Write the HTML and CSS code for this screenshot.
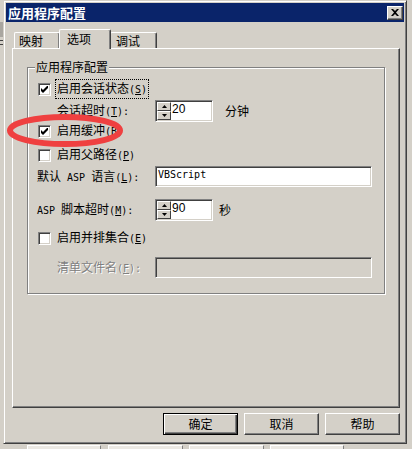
FILE: index.html
```html
<!DOCTYPE html>
<html lang="zh-CN">
<head>
<meta charset="utf-8">
<title>应用程序配置</title>
<link rel="stylesheet" href="styles.css">
</head>
<body>
<div class="screen">
  <div class="main">
    <div class="under-left"><div class="blk"></div><div class="mark"></div><div class="mark"></div></div>
    <div class="dialog">
      <div class="titlebar">
        <span class="title">应用程序配置</span>
        <span class="close"><svg viewBox="0 0 8 7" width="8" height="7"><path d="M0 0 L2 0 L4 2 L6 0 L8 0 L5 3.5 L8 7 L6 7 L4 5 L2 7 L0 7 L3 3.5 Z" fill="#000"/></svg></span>
      </div>
      <div class="client">
        <div class="tabs">
          <div class="tab t1">映射</div>
          <div class="tab sel">选项</div>
          <div class="tab t3">调试</div>
        </div>
        <div class="panel">
          <div class="group">
            <span class="legend">应用程序配置</span>
            <div class="row chk-row">
              <span class="cb"><svg viewBox="0 0 7 7"><polygon points="0,2 2,4 7,-1 7,2 2,7 0,5" fill="#000"/></svg></span>
              <span class="cl focus">启用会话状态<span class="mn">(<u>S</u>)</span></span>
            </div>
            <div class="row ctl-row mt2">
              <span class="lab ind">会话超时<span class="mn">(<u>T</u>):</span></span>
              <span class="spin">
                <span class="spin-btns">
                  <span class="sb"><svg viewBox="0 0 5 3"><polygon points="2.5,0 5,3 0,3" fill="#000"/></svg></span>
                  <span class="sb"><svg viewBox="0 0 5 3"><polygon points="0,0 5,0 2.5,3" fill="#000"/></svg></span>
                </span>
                <span class="spin-val">20</span>
              </span>
              <span class="unit u1">分钟</span>
            </div>
            <div class="row chk-row">
              <span class="cb"><svg viewBox="0 0 7 7"><polygon points="0,2 2,4 7,-1 7,2 2,7 0,5" fill="#000"/></svg></span>
              <span class="cl">启用缓冲<span class="mn">(<u>B</u>)</span></span>
            </div>
            <div class="row chk-row mt6">
              <span class="cb"></span>
              <span class="cl">启用父路径<span class="mn">(<u>P</u>)</span></span>
            </div>
            <div class="row fld-row mt2">
              <span class="lab out">默认<span class="mn"> ASP </span>语言<span class="mn">(<u>L</u>):</span></span>
              <span class="field">VBScript</span>
            </div>
            <div class="row ctl-row mt12">
              <span class="lab out"><span class="mn">ASP </span>脚本超时<span class="mn">(<u>M</u>):</span></span>
              <span class="spin">
                <span class="spin-btns">
                  <span class="sb"><svg viewBox="0 0 5 3"><polygon points="2.5,0 5,3 0,3" fill="#000"/></svg></span>
                  <span class="sb"><svg viewBox="0 0 5 3"><polygon points="0,0 5,0 2.5,3" fill="#000"/></svg></span>
                </span>
                <span class="spin-val">90</span>
              </span>
              <span class="unit u2">秒</span>
            </div>
            <div class="row chk-row mt8">
              <span class="cb"></span>
              <span class="cl">启用并排集合<span class="mn">(<u>E</u>)</span></span>
            </div>
            <div class="row fld-row mt10">
              <span class="lab ind dis">清单文件名<span class="mn">(<u>F</u>):</span></span>
              <span class="field dis"></span>
            </div>
          </div>
        </div>
        <div class="buttons">
          <span class="btn def">确定</span>
          <span class="btn">取消</span>
          <span class="btn">帮助</span>
        </div>
      </div>
    </div>
    <div class="under-right"></div>
  </div>
  <div class="under-bottom">
    <span class="ub b1"></span>
    <span class="ub b2"></span>
    <span class="ub b3"></span>
    <span class="ub b4"></span>
  </div>
  <svg class="ink" viewBox="0 0 412 449" width="412" height="449">
    <ellipse cx="65" cy="130.5" rx="55" ry="13.5" fill="none" stroke="#ef4040" stroke-width="6"/>
  </svg>
</div>
</body>
</html>
```

FILE: styles.css
```css
* { box-sizing: border-box; }
html, body { margin: 0; padding: 0; }
body {
  font-family: "Noto Sans CJK SC", sans-serif;
  font-size: 12px;
  color: #000;
  background: #d4d0c8;
}
.screen {
  position: relative;
  width: 412px;
  height: 449px;
  overflow: hidden;
  background: #d4d0c8;
}
.main { display: flex; height: 444px; }

.under-left { width: 3px; flex: none; display: flex; flex-direction: column; }
.under-left .blk { height: 15px; margin-top: 22px; background: #a9a6a0; }
.under-left .mark { height: 1px; margin-top: 3px; background: #404040; width: 3px; }
.under-right { flex: 1; background: #d4d0c8; }

.dialog {
  width: 404px;
  height: 444px;
  flex: none;
  border: 1px solid;
  border-color: #d4d0c8 #404040 #404040 #d4d0c8;
  box-shadow: inset 1px 1px #fff, inset -1px -1px #808080;
  padding: 2px;
  display: flex;
  flex-direction: column;
  background: #d4d0c8;
}
.titlebar {
  height: 19px;
  flex: none;
  background: #0a246a;
  display: flex;
  align-items: center;
  justify-content: space-between;
  padding: 0 1px 0 2px;
}
.title {
  color: #fff;
  font-weight: bold;
  font-size: 13px;
  line-height: 15px;
}
.close {
  width: 16px;
  height: 14px;
  background: #d4d0c8;
  border: 1px solid;
  border-color: #fff #404040 #404040 #fff;
  box-shadow: inset -1px -1px #808080;
  display: flex;
  align-items: center;
  justify-content: center;
}
.close svg { display: block; }

.client { flex: 1; display: flex; flex-direction: column; }
.tabs {
  display: flex;
  align-items: flex-end;
  height: 19px;
  margin-top: 7px;
  padding-left: 8px;
}
.tab {
  height: 16px;
  background: #d4d0c8;
  border-left: 1px solid #fff;
  border-top: 1px solid #fff;
  border-right: 1px solid #404040;
  box-shadow: inset -1px 0 #808080;
  border-radius: 2px 2px 0 0;
  line-height: 14px;
  padding-top: 1px;
  white-space: nowrap;
}
.tab.t1 { width: 46px; padding-left: 4px; }
.tab.sel {
  position: relative;
  z-index: 1;
  width: 52px;
  height: 20px;
  margin: 0 -1px -1px -1px;
  padding-left: 7px;
  padding-top: 2px;
}
.tab.t3 { width: 47px; padding-left: 5px; }

.panel {
  margin-left: 6px;
  width: 388px;
  height: 360px;
  flex: none;
  border-left: 1px solid #fff;
  border-top: 1px solid #fff;
  border-right: 1px solid #404040;
  border-bottom: 1px solid #404040;
  box-shadow: inset -1px -1px #808080;
  padding: 18px 0 0 14px;
}
.group {
  position: relative;
  width: 358px;
  height: 227px;
  border: 1px solid #808080;
  box-shadow: 1px 1px 0 #fff, inset 1px 1px 0 #fff;
  padding-top: 12px;
}
.legend {
  position: absolute;
  left: 7px;
  top: -8px;
  padding: 0 1px;
  background: #d4d0c8;
  line-height: 14px;
  white-space: nowrap;
}

.row { display: flex; align-items: center; }
.chk-row { height: 18px; padding-left: 10px; }
.ctl-row { height: 22px; }
.fld-row { height: 21px; }
.mt2 { margin-top: 2px; }
.mt6 { margin-top: 6px; }
.mt8 { margin-top: 8px; }
.mt10 { margin-top: 10px; }
.mt12 { margin-top: 12px; }

.cb {
  width: 13px;
  height: 13px;
  flex: none;
  background: #fff;
  border: 1px solid;
  border-color: #808080 #fff #fff #808080;
  box-shadow: inset 1px 1px #404040, inset -1px -1px #d4d0c8;
  display: flex;
  align-items: center;
  justify-content: center;
}
.cb svg { display: block; width: 7px; height: 7px; }
.cl {
  margin-left: 4px;
  border: 1px solid transparent;
  padding: 1px;
  line-height: 14px;
  white-space: nowrap;
}
.cl.focus { border: 1px dotted #000; }

.mn {
  font-family: "DejaVu Sans Mono", "Liberation Mono", monospace;
  font-size: 10px;
  white-space: pre;
}
.lab { flex: none; white-space: nowrap; line-height: 14px; }
.lab.ind { margin-left: 29px; width: 98px; }
.lab.out { margin-left: 9px; width: 118px; }
.lab.dis { color: #808080; text-shadow: 1px 1px 0 #fff; }

.spin {
  width: 58px;
  height: 22px;
  flex: none;
  display: flex;
  background: #fff;
  border: 1px solid;
  border-color: #808080 #fff #fff #808080;
  box-shadow: inset 1px 1px #404040, inset -1px -1px #d4d0c8;
  padding: 1px;
}
.spin-btns { width: 14px; flex: none; display: flex; flex-direction: column; }
.sb {
  height: 9px;
  background: #d4d0c8;
  border: 1px solid;
  border-color: #fff #404040 #404040 #fff;
  display: flex;
  align-items: center;
  justify-content: center;
}
.sb svg { display: block; width: 5px; height: 3px; }
.spin-val {
  font-family: "Liberation Sans", Arial, sans-serif;
  font-size: 12px;
  line-height: 14px;
  padding-left: 1px;
}
.unit { line-height: 14px; white-space: nowrap; }
.unit.u1 { margin-left: 12px; }
.unit.u2 { margin-left: 6px; }

.field {
  width: 217px;
  height: 21px;
  flex: none;
  background: #fff;
  border: 1px solid;
  border-color: #808080 #fff #fff #808080;
  box-shadow: inset 1px 1px #404040, inset -1px -1px #d4d0c8;
  padding: 1px 0 0 2px;
  font-family: "DejaVu Sans Mono", "Liberation Mono", monospace;
  font-size: 10px;
  line-height: 14px;
}
.field.dis { background: #d4d0c8; }

.buttons {
  display: flex;
  justify-content: flex-end;
  gap: 6px;
  margin-top: 5px;
  padding-right: 4px;
}
.btn {
  width: 75px;
  height: 22px;
  background: #d4d0c8;
  border: 1px solid;
  border-color: #fff #404040 #404040 #fff;
  box-shadow: inset -1px -1px #808080;
  display: flex;
  align-items: center;
  justify-content: center;
  line-height: 14px;
}
.btn.def {
  border-color: #000;
  box-shadow: inset 1px 1px #fff, inset -1px -1px #404040, inset -2px -2px #808080;
}

.under-bottom {
  height: 5px;
  display: flex;
  padding-top: 1px;
  background: #d4d0c8;
}
.ub {
  height: 4px;
  flex: none;
  background: #fff;
  border-top: 1px solid #fff;
  border-left: 1px solid #fff;
  border-right: 1px solid #808080;
}
.ub.b1 { margin-left: 27px; width: 74px; background: #ece9e4; }
.ub.b2 { margin-left: 7px; width: 75px; background: #ece9e4; }
.ub.b3 { margin-left: 6px; width: 75px; background: #ece9e4; }
.ub.b4 { margin-left: 6px; width: 74px; background: #ece9e4; }

.ink {
  position: absolute;
  left: 0;
  top: 0;
  pointer-events: none;
}
```
